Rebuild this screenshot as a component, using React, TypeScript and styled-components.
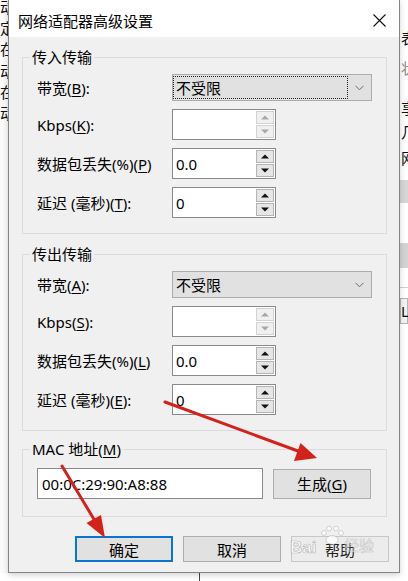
import React from "react";
import styled, { createGlobalStyle } from "styled-components";

const GlobalStyle = createGlobalStyle`
  html, body { margin: 0; padding: 0; background: #fff; }
  body { font-family: "Noto Sans", "Noto Sans CJK SC", sans-serif; color: #000; }
  * { box-sizing: border-box; }
`;

const Screen = styled.div`
  position: relative;
  width: 408px;
  height: 581px;
  overflow: hidden;
  display: flex;
  flex-direction: column;
  background: #fff;
`;

const TopRow = styled.div`
  display: flex;
  height: 573px;
  flex: none;
`;

const LeftStrip = styled.div`
  width: 8px;
  flex: none;
  overflow: hidden;
  background: #fafafa;
  font-family: "Noto Sans CJK SC", sans-serif;
  font-size: 15px;
  line-height: 21.2px;
  color: #111;
  white-space: nowrap;
`;

const LeftText = styled.div`
  margin-top: -4px;
  display: flex;
  flex-direction: column;
`;

const RightStrip = styled.div`
  width: 8px;
  flex: none;
  overflow: hidden;
  background: #fff;
  display: flex;
  flex-direction: column;
  font-family: "Noto Sans CJK SC", sans-serif;
  font-size: 15px;
  white-space: nowrap;
`;

const StripChar = styled.div<{ $mt: number; $muted?: boolean }>`
  margin-top: ${(p) => p.$mt}px;
  line-height: 20px;
  height: 20px;
  padding-left: 1px;
  color: ${(p) => (p.$muted ? "#8a8a8a" : "#111")};
`;

const StripBar = styled.div<{ $mt: number; $h: number; $bg: string }>`
  margin-top: ${(p) => p.$mt}px;
  height: ${(p) => p.$h}px;
  background: ${(p) => p.$bg};
  flex: none;
`;

const StripBox = styled.div<{ $mt: number }>`
  margin-top: ${(p) => p.$mt}px;
  height: 26px;
  border: 1px solid #b5b5b5;
  background: #f3f3f3;
  font-family: "Noto Sans", sans-serif;
  font-size: 15px;
  line-height: 24px;
  padding-left: 0;
  color: #111;
`;

const Dialog = styled.div`
  width: 392px;
  flex: none;
  border: 1px solid #858585;
  border-top: none;
  display: flex;
  flex-direction: column;
  position: relative;
  z-index: 1;
  box-shadow: 0 2px 6px rgba(0, 0, 0, 0.18);
`;

const TitleBar = styled.div`
  height: 37px;
  flex: none;
  background: #fff;
  display: flex;
  align-items: center;
  justify-content: space-between;
  padding: 3px 13px 0 9px;
  font-family: "Noto Sans CJK SC", sans-serif;
  font-size: 15px;
`;

const Body = styled.div`
  flex: 1;
  background: #f0f0f0;
  padding: 11px 12px 10px 13px;
  display: flex;
  flex-direction: column;
`;

const Group = styled.fieldset<{ $mt: number }>`
  margin: ${(p) => p.$mt}px 0 0;
  padding: 0;
  border: 1px solid #dcdcdc;
  min-width: 0;
  flex: none;
`;

const Legend = styled.legend`
  margin-left: 7px;
  padding: 0 2px;
  font-size: 15px;
  line-height: 18px;
  white-space: nowrap;
`;

const GroupInner = styled.div<{ $pt: number; $pb: number }>`
  display: flex;
  flex-direction: column;
  gap: 8px;
  padding: ${(p) => p.$pt}px 14px ${(p) => p.$pb}px;
`;

const Row = styled.div`
  display: grid;
  grid-template-columns: 135px auto;
  align-items: center;
`;

const Label = styled.span`
  font-size: 15px;
  line-height: 18px;
  white-space: nowrap;
  u {
    text-underline-offset: 2px;
  }
`;

const Combo = styled.div`
  width: 200px;
  height: 27px;
  border: 1px solid #adadad;
  background: #e1e1e1;
  display: flex;
  align-items: center;
`;

const ComboFace = styled.div<{ $focused?: boolean }>`
  width: 175px;
  height: 23px;
  margin-left: 0;
  border: 1px dotted ${(p) => (p.$focused ? "#222" : "transparent")};
  padding-left: 2px;
  display: flex;
  align-items: center;
  font-size: 15px;
  font-family: "Noto Sans CJK SC", sans-serif;
`;

const ComboArrow = styled.div`
  flex: 1;
  display: flex;
  justify-content: center;
  align-items: center;
`;

const SpinBox = styled.div`
  width: 104px;
  height: 31px;
  border: 1px solid #8a8a8a;
  background: #fff;
  padding: 1px;
  display: flex;
`;

const SpinText = styled.div`
  flex: 1;
  padding-left: 2px;
  display: flex;
  align-items: center;
  font-size: 15px;
`;

const SpinButtons = styled.div`
  width: 18px;
  display: flex;
  flex-direction: column;
  gap: 1px;
`;

const SpinBtn = styled.div<{ $disabled?: boolean }>`
  flex: 1;
  border: 1px solid ${(p) => (p.$disabled ? "#d2d2d2" : "#b4b4b4")};
  background: ${(p) => (p.$disabled ? "#f0f0f0" : "#e6e6e6")};
  display: flex;
  align-items: center;
  justify-content: center;
`;

const MacRow = styled.div`
  display: flex;
  align-items: center;
  gap: 10px;
`;

const MacInput = styled.div`
  width: 226px;
  height: 31px;
  border: 1px solid #8a8a8a;
  background: #fff;
  padding-left: 4px;
  display: flex;
  align-items: center;
  font-size: 15px;
`;

const Button = styled.div<{ $primary?: boolean; $w?: number; $h?: number }>`
  width: ${(p) => p.$w ?? 98}px;
  height: ${(p) => p.$h ?? 26}px;
  border: ${(p) => (p.$primary ? "2px solid #0a74d0" : "1px solid #adadad")};
  background: #e1e1e1;
  display: flex;
  align-items: center;
  justify-content: center;
  font-size: 15px;
  white-space: nowrap;
  flex: none;
  u {
    text-underline-offset: 2px;
  }
`;

const HelpButton = styled(Button)`
  border-color: #c8c8c8;
  background: #ececec;
  color: #222;
`;

const ButtonRow = styled.div`
  margin-top: 19px;
  margin-right: -2px;
  display: flex;
  justify-content: flex-end;
  gap: 10px;
`;

const BottomStrip = styled.div`
  flex: 1;
  background: #fff;
  padding-left: 199px;
  display: flex;
`;

const BottomLine = styled.div`
  width: 1px;
  background: #444;
`;

const Overlay = styled.svg`
  position: absolute;
  left: 0;
  top: 0;
  width: 408px;
  height: 581px;
  pointer-events: none;
  z-index: 5;
`;

const Chevron = () => (
  <svg width="9" height="6" viewBox="0 0 9 6">
    <polyline points="0.5,0.8 4.5,4.8 8.5,0.8" fill="none" stroke="#6a6a6a" strokeWidth="1" />
  </svg>
);

const Tri = ({ up, color }: { up: boolean; color: string }) => (
  <svg width="8" height="5" viewBox="0 0 8 5">
    <polygon points={up ? "0,4.5 8,4.5 4,0.5" : "0,0.5 8,0.5 4,4.5"} fill={color} />
  </svg>
);

const Spin = ({ value, disabled }: { value: string; disabled?: boolean }) => {
  const c = disabled ? "#a8a8a8" : "#111";
  return (
    <SpinBox>
      <SpinText>{value}</SpinText>
      <SpinButtons>
        <SpinBtn $disabled={disabled}>
          <Tri up color={c} />
        </SpinBtn>
        <SpinBtn $disabled={disabled}>
          <Tri up={false} color={c} />
        </SpinBtn>
      </SpinButtons>
    </SpinBox>
  );
};

const ComboBox = ({ focused }: { focused?: boolean }) => (
  <Combo>
    <ComboFace $focused={focused}>不受限</ComboFace>
    <ComboArrow>
      <Chevron />
    </ComboArrow>
  </Combo>
);

type Keys = { bw: string; kb: string; pl: string; dl: string };

const Transfer = ({ title, keys, focused, mt }: { title: string; keys: Keys; focused?: boolean; mt: number }) => (
  <Group $mt={mt}>
    <Legend>{title}</Legend>
    <GroupInner $pt={8} $pb={15}>
      <Row>
        <Label>
          带宽(<u>{keys.bw}</u>):
        </Label>
        <ComboBox focused={focused} />
      </Row>
      <Row>
        <Label>
          Kbps(<u>{keys.kb}</u>):
        </Label>
        <Spin value="" disabled />
      </Row>
      <Row>
        <Label>
          数据包丢失(%)(<u>{keys.pl}</u>)
        </Label>
        <Spin value="0.0" />
      </Row>
      <Row>
        <Label>
          延迟 (毫秒)(<u>{keys.dl}</u>):
        </Label>
        <Spin value="0" />
      </Row>
    </GroupInner>
  </Group>
);

const arrowColor = "#d3221c";

export default function App() {
  return (
    <>
      <GlobalStyle />
      <Screen>
        <TopRow>
          <LeftStrip>
            <LeftText>
              <span>动</span>
              <span>定</span>
              <span>在</span>
              <span>动</span>
              <span>在</span>
              <span>动</span>
            </LeftText>
          </LeftStrip>
          <Dialog>
            <TitleBar>
              <span>网络适配器高级设置</span>
              <svg width="13" height="13" viewBox="0 0 13 13">
                <path d="M0.5 0.5 L12.5 12.5 M12.5 0.5 L0.5 12.5" stroke="#111" strokeWidth="1.1" />
              </svg>
            </TitleBar>
            <Body>
              <Transfer title="传入传输" keys={{ bw: "B", kb: "K", pl: "P", dl: "T" }} focused mt={0} />
              <Transfer title="传出传输" keys={{ bw: "A", kb: "S", pl: "L", dl: "E" }} mt={11} />
              <Group $mt={9}>
                <Legend>
                  MAC 地址(<u style={{ textUnderlineOffset: 2 }}>M</u>)
                </Legend>
                <GroupInner $pt={10} $pb={17}>
                  <MacRow>
                    <MacInput>00:0C:29:90:A8:88</MacInput>
                    <Button $h={30}>
                      生成(<u>G</u>)
                    </Button>
                  </MacRow>
                </GroupInner>
              </Group>
              <ButtonRow>
                <Button $primary>确定</Button>
                <Button>取消</Button>
                <HelpButton>帮助</HelpButton>
              </ButtonRow>
            </Body>
          </Dialog>
          <RightStrip>
            <StripChar $mt={28}>表</StripChar>
            <StripChar $mt={10} $muted>
              状
            </StripChar>
            <StripChar $mt={20}>享</StripChar>
            <StripChar $mt={4}>几</StripChar>
            <StripChar $mt={6}>网</StripChar>
            <StripBar $mt={12} $h={23} $bg="#d6d6d6" />
            <StripBar $mt={40} $h={25} $bg="#d3d3d3" />
            <StripBar $mt={19} $h={1} $bg="#cfcfcf" />
            <StripBox $mt={10}>LA</StripBox>
          </RightStrip>
        </TopRow>
        <BottomStrip>
          <BottomLine />
        </BottomStrip>
        <Overlay viewBox="0 0 408 581">
          <line x1="165" y1="402" x2="298" y2="451" stroke={arrowColor} strokeWidth="3" strokeLinecap="round" />
          <polygon points="317,458 300.5,443 294,461" fill={arrowColor} />
          <line x1="62" y1="466" x2="95" y2="521" stroke={arrowColor} strokeWidth="3" strokeLinecap="round" />
          <polygon points="105,538 86.5,523 101,515" fill={arrowColor} />
          <g opacity="0.9">
            <text
              x="290"
              y="553"
              fontFamily="Liberation Sans, sans-serif"
              fontWeight="bold"
              fontSize="17"
              fill="rgba(255,255,255,0.85)"
              stroke="rgba(120,120,120,0.55)"
              strokeWidth="0.7"
            >
              Bai
            </text>
            <g fill="rgba(255,255,255,0.85)" stroke="rgba(130,130,130,0.5)" strokeWidth="0.7">
              <ellipse cx="332" cy="540" rx="6" ry="4.5" />
              <circle cx="324" cy="533" r="2.4" />
              <circle cx="329" cy="528.5" r="2.4" />
              <circle cx="336" cy="528.5" r="2.4" />
              <circle cx="341" cy="533" r="2.4" />
            </g>
            <text
              x="344"
              y="551"
              fontFamily="Noto Sans CJK SC, sans-serif"
              fontSize="15"
              fill="rgba(255,255,255,0.7)"
              stroke="rgba(140,140,140,0.45)"
              strokeWidth="0.6"
            >
              经验
            </text>
          </g>
        </Overlay>
      </Screen>
    </>
  );
}
